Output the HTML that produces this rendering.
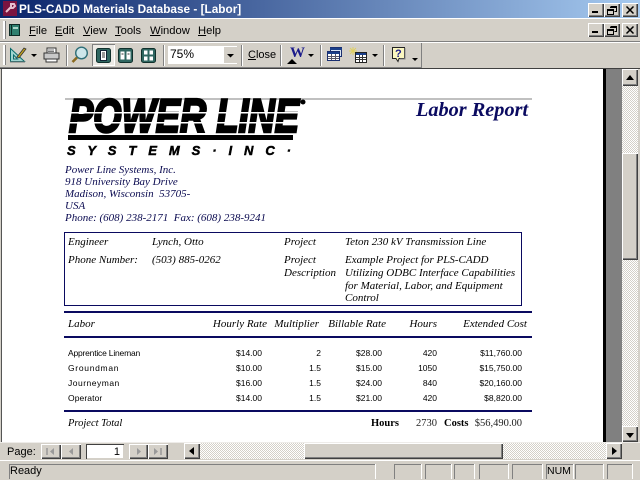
<!DOCTYPE html>
<html><head><meta charset="utf-8">
<style>
html,body{margin:0;padding:0;background:#d4d0c8;}
#r{position:relative;width:640px;height:480px;overflow:hidden;background:#d4d0c8;font-family:"Liberation Sans",sans-serif;}
.a{position:absolute;}
.t{position:absolute;white-space:nowrap;line-height:12px;}
.s{font-family:"Liberation Serif",serif;font-style:italic;font-size:11px;color:#0a0a50;}
.k{color:#000;font-style:italic;font-family:"Liberation Serif",serif;font-size:11px;}
.d{font-size:8.5px;color:#000;}
.rr{text-align:right;}
.m{font-size:11.2px;color:#000;top:25px;}
.u{text-decoration:underline;}
.b{position:absolute;background:#d4d0c8;box-shadow:inset 1px 1px 0 #fff,inset -1px -1px 0 #404040,inset -2px -2px 0 #808080;}
.sep{position:absolute;width:1px;background:#808080;border-right:1px solid #fff;}
.pat{position:absolute;background-color:#fff;background-image:repeating-conic-gradient(#d4d0c8 0 25%,#fff 0 50%);background-size:2px 2px;}
.st{position:absolute;top:464px;height:15px;box-shadow:inset 1px 1px 0 #808080,1px 0 0 #fff;}
svg{position:absolute;overflow:visible;}
</style></head><body><div id="r">

<!-- title bar -->
<div class="a" style="left:0;top:0;width:640px;height:18px;background:linear-gradient(90deg,#0a246a,#a6caf0);"></div>
<svg style="left:3px;top:1px" width="16" height="16" viewBox="0 0 16 16"><rect width="14" height="15" fill="#7a1440"/><path d="M3 11l5-5M8 3h3l1 2-2 2H8z" stroke="#e8c0d0" stroke-width="2" fill="none"/></svg>
<div class="t" style="left:19px;top:3px;font-size:11.800px;font-weight:bold;color:#fff;">PLS-CADD Materials Database - [Labor]</div>
<div class="b" style="left:588px;top:3px;width:16px;height:14px;"></div>
<div class="a" style="left:592px;top:11px;width:6px;height:2px;background:#000;"></div>
<div class="b" style="left:604px;top:3px;width:16px;height:14px;"></div>
<svg style="left:604px;top:3px" width="16" height="14"><path d="M6.500 3.500h6v5h-2M3.500 6.500h6v5h-6z M6 4.500h6 M4 7.500h5" stroke="#000" fill="none"/></svg>
<div class="b" style="left:622px;top:3px;width:16px;height:14px;"></div>
<svg style="left:622px;top:3px" width="16" height="14"><path d="M4.500 3.500l7 7M11.500 3.500l-7 7" stroke="#000" stroke-width="1.500" fill="none"/></svg>
<div class="a" style="left:0;top:18px;width:640px;height:1px;background:#fff;"></div>

<!-- menu bar -->
<div class="a" style="left:3px;top:21px;width:2px;height:18px;background:#fff;border-right:1px solid #808080;"></div>
<svg style="left:9px;top:24px" width="13" height="14"><rect x="0.500" y="0.500" width="10" height="11" fill="#2f7f6e" stroke="#0c2a24"/><rect x="2" y="1" width="1" height="10" fill="#0c2a24"/><rect x="4" y="3" width="5" height="2" fill="#a9d6c8"/></svg>
<div class="t m" style="left:29px;"><span class="u">F</span>ile</div>
<div class="t m" style="left:55px;"><span class="u">E</span>dit</div>
<div class="t m" style="left:83px;"><span class="u">V</span>iew</div>
<div class="t m" style="left:115px;"><span class="u">T</span>ools</div>
<div class="t m" style="left:150px;"><span class="u">W</span>indow</div>
<div class="t m" style="left:198px;"><span class="u">H</span>elp</div>
<div class="b" style="left:588px;top:23px;width:16px;height:14px;"></div>
<div class="a" style="left:592px;top:31px;width:6px;height:2px;background:#000;"></div>
<div class="b" style="left:604px;top:23px;width:16px;height:14px;"></div>
<svg style="left:604px;top:23px" width="16" height="14"><path d="M6.500 3.500h6v5h-2M3.500 6.500h6v5h-6z M6 4.500h6 M4 7.500h5" stroke="#000" fill="none"/></svg>
<div class="b" style="left:622px;top:23px;width:16px;height:14px;"></div>
<svg style="left:622px;top:23px" width="16" height="14"><path d="M4.500 3.500l7 7M11.500 3.500l-7 7" stroke="#000" stroke-width="1.500" fill="none"/></svg>
<div class="a" style="left:0;top:41px;width:640px;height:1px;background:#808080;"></div>
<div class="a" style="left:0;top:42px;width:640px;height:1px;background:#fff;"></div>

<!-- toolbar -->
<div class="a" style="left:0;top:43px;width:422px;height:25px;box-shadow:inset -1px -1px 0 #808080,inset -1px 0 0 #fff;"></div>
<div class="a" style="left:3px;top:45px;width:2px;height:20px;background:#fff;border-right:1px solid #808080;"></div>
<svg style="left:9px;top:47px" width="17" height="17"><path d="M1.500 1.500v13h14zM4.500 8v4h4z" fill="#9fd4d0" fill-rule="evenodd" stroke="#0a6a6a"/><path d="M8 10l7-9 2 1-7 9z" fill="#c0a020" stroke="#333" stroke-width=".8"/><path d="M1 15h15" stroke="#777"/></svg>
<svg style="left:31px;top:54px" width="7" height="4"><path d="M0 0h6l-3 3z" fill="#000"/></svg>
<svg style="left:43px;top:47px" width="17" height="17"><path d="M4 1h9v5H4z" fill="#fff" stroke="#333"/><path d="M1 6h15v6H1z" fill="#c8c8c8" stroke="#333"/><path d="M3 12h11v3H3z" fill="#fff" stroke="#333"/><path d="M5 3h6M5 4.500h6" stroke="#777"/></svg>
<div class="sep" style="left:66px;top:45px;height:21px;"></div>
<svg style="left:71px;top:46px" width="18" height="18"><circle cx="10.500" cy="7" r="5.800" fill="#cde6ea" stroke="#2f6f78" stroke-width="1.400"/><path d="M6 11.500L1.500 16" stroke="#8a6a20" stroke-width="2.600"/></svg>
<div class="a" style="left:92px;top:44px;width:23px;height:22px;background:#eceae5;box-shadow:inset 1px 1px 0 #808080,inset -1px -1px 0 #fff;"></div>
<svg style="left:96px;top:48px" width="15" height="15"><rect x=".5" y=".5" width="14" height="14" rx="2" fill="#2f6660" stroke="#10302c"/><rect x="4.500" y="2.500" width="6" height="10" fill="#fff" stroke="#123"/><path d="M6 5h3M6 7h3M6 9h3" stroke="#333"/></svg>
<svg style="left:118px;top:48px" width="15" height="15"><rect x=".5" y=".5" width="14" height="14" rx="2" fill="#2f6660" stroke="#10302c"/><rect x="2.500" y="3.500" width="4" height="8" fill="#fff"/><rect x="8.500" y="3.500" width="4" height="8" fill="#fff"/><path d="M3.500 6h2M9.500 6h2" stroke="#333"/></svg>
<svg style="left:141px;top:48px" width="15" height="15"><rect x=".5" y=".5" width="14" height="14" rx="2" fill="#2f6660" stroke="#10302c"/><rect x="3" y="2.500" width="3.500" height="4" fill="#fff"/><rect x="8.500" y="2.500" width="3.500" height="4" fill="#fff"/><rect x="3" y="8.500" width="3.500" height="4" fill="#fff"/><rect x="8.500" y="8.500" width="3.500" height="4" fill="#fff"/></svg>
<div class="sep" style="left:163px;top:45px;height:21px;"></div>
<div class="a" style="left:168px;top:46px;width:69px;height:18px;background:#fff;"></div>
<div class="t" style="left:170px;top:48px;font-size:12px;color:#000;">75%</div>
<div class="a" style="left:224px;top:47px;width:13px;height:16px;background:#d4d0c8;"></div>
<svg style="left:227px;top:54px" width="7" height="4"><path d="M0 0h7l-3.500 3.500z" fill="#000"/></svg>
<div class="sep" style="left:241px;top:45px;height:21px;"></div>
<div class="t" style="left:248px;top:49px;font-size:11px;color:#000;"><span class="u">C</span>lose</div>
<div class="sep" style="left:280px;top:45px;height:21px;"></div>
<div class="t" style="left:290px;top:46px;font-size:15px;line-height:14px;font-weight:bold;font-family:'Liberation Serif',serif;color:#1a1a8a;">W</div>
<svg style="left:287px;top:59px" width="10" height="5"><path d="M0 5l5-5 5 5z" fill="#000"/></svg>
<svg style="left:308px;top:54px" width="7" height="4"><path d="M0 0h6l-3 3z" fill="#000"/></svg>
<div class="sep" style="left:320px;top:45px;height:21px;"></div>
<svg style="left:327px;top:46px" width="17" height="17"><path d="M3.500 1.500h11v9h-11z" fill="#d8e4f4" stroke="#1a2f70"/><path d="M3 2h12v2H3z" fill="#1a3f8a"/><path d="M.5 5.500h12v9H.5z" fill="#fff" stroke="#1a2f70"/><path d="M1 6h11v2H1z" fill="#1a3f8a"/><path d="M1 10.500h11M1 12.500h11M4.500 8v6M8.500 8v6" stroke="#556"/></svg>
<svg style="left:349px;top:46px" width="18" height="18"><path d="M4 1v8M0 5h8M1 2l6 6M7 2l-6 6" stroke="#e0d060" stroke-width="1"/><path d="M6.500 6.500h11v10h-11z" fill="#fff" stroke="#222"/><path d="M7 7h10v2H7z" fill="#1a3f8a"/><path d="M7 11.500h10M7 13.500h10M10.500 9v7M13.500 9v7" stroke="#333"/></svg>
<svg style="left:372px;top:54px" width="7" height="4"><path d="M0 0h6l-3 3z" fill="#000"/></svg>
<div class="sep" style="left:383px;top:45px;height:21px;"></div>
<svg style="left:392px;top:47px" width="15" height="17"><path d="M.5.5h12v11H7l-1 3-2-3H.5z" fill="#fbf7c0" stroke="#222"/><path d="M13 1v11H8" stroke="#888" fill="none"/></svg>
<div class="t" style="left:395px;top:48px;font-size:11px;font-weight:bold;color:#1a1a8a;">?</div>
<svg style="left:412px;top:58px" width="7" height="4"><path d="M0 0h6l-3 3z" fill="#000"/></svg>
<div class="a" style="left:0;top:68px;width:640px;height:1px;background:#404040;"></div>

<!-- report area -->
<div class="a" style="left:0;top:69px;width:1px;height:373px;background:#d4d0c8;"></div>
<div class="a" style="left:1px;top:69px;width:1px;height:373px;background:#555;"></div>
<div class="a" style="left:2px;top:69px;width:601px;height:373px;background:#fff;"></div>
<div class="a" style="left:603px;top:69px;width:3px;height:373px;background:#000;"></div>
<div class="a" style="left:606px;top:69px;width:16px;height:373px;background:#808080;"></div>

<!-- header -->
<div class="a" style="left:65px;top:98px;width:467px;height:2px;background:#c0c0c0;"></div>
<div class="t" style="left:416px;top:100px;font-size:20.300px;line-height:20px;font-family:'Liberation Serif',serif;font-style:italic;font-weight:bold;color:#0a0a60;">Labor Report</div>

<!-- logo -->
<svg style="left:65px;top:95px" width="245" height="65" viewBox="0 0 245 65">
<text x="4" y="37" font-family="Liberation Sans" font-size="47" font-weight="bold" font-style="italic" textLength="230" lengthAdjust="spacingAndGlyphs" stroke="#000" stroke-width="2.600">POWER LINE</text>
<rect x="0" y="17" width="240" height="1.500" fill="#fff"/>
<rect x="0" y="27" width="240" height="1.500" fill="#fff"/>
<rect x="3" y="40" width="225" height="5" fill="#000"/>
<circle cx="238" cy="7" r="2.500" fill="#000"/>
<text x="2" y="60" font-family="Liberation Sans" font-size="13" font-weight="bold" font-style="italic" textLength="224" fill="#000" stroke="#000" stroke-width=".5">S Y S T E M S · I N C ·</text>
</svg>

<!-- address -->
<div class="t s" style="left:65px;top:164px;">Power Line Systems, Inc.</div>
<div class="t s" style="left:65px;top:176px;">918 University Bay Drive</div>
<div class="t s" style="left:65px;top:188px;">Madison, Wisconsin&nbsp; 53705-</div>
<div class="t s" style="left:65px;top:200px;">USA</div>
<div class="t s" style="left:65px;top:212px;">Phone: (608) 238-2171&nbsp; Fax: (608) 238-9241</div>

<!-- box -->
<div class="a" style="left:64px;top:232px;width:456px;height:72px;border:1px solid #0a0a60;"></div>
<div class="t k" style="left:68px;top:236px;">Engineer</div>
<div class="t k" style="left:152px;top:236px;">Lynch, Otto</div>
<div class="t k" style="left:284px;top:236px;">Project</div>
<div class="t k" style="left:345px;top:236px;">Teton 230 kV Transmission Line</div>
<div class="t k" style="left:68px;top:254px;">Phone Number:</div>
<div class="t k" style="left:152px;top:254px;">(503) 885-0262</div>
<div class="t k" style="left:284px;top:254px;">Project</div>
<div class="t k" style="left:284px;top:267px;">Description</div>
<div class="t k" style="left:345px;top:254px;">Example Project for PLS-CADD</div>
<div class="t k" style="left:345px;top:267px;">Utilizing ODBC Interface Capabilities</div>
<div class="t k" style="left:345px;top:280px;">for Material, Labor, and Equipment</div>
<div class="t k" style="left:345px;top:292px;">Control</div>

<!-- table head -->
<div class="a" style="left:64px;top:311px;width:468px;height:2px;background:#0a0a60;"></div>
<div class="t k" style="left:68px;top:318px;">Labor</div>
<div class="t k rr" style="left:190px;width:77px;top:318px;">Hourly Rate</div>
<div class="t k rr" style="left:260px;width:59px;top:318px;">Multiplier</div>
<div class="t k rr" style="left:316px;width:70px;top:318px;">Billable Rate</div>
<div class="t k rr" style="left:390px;width:47px;top:318px;">Hours</div>
<div class="t k rr" style="left:440px;width:87px;top:318px;">Extended Cost</div>
<div class="a" style="left:64px;top:336px;width:468px;height:2px;background:#0a0a60;"></div>

<!-- rows -->
<div class="t d" style="left:68px;top:347px;letter-spacing:-.2px;">Apprentice Lineman</div>
<div class="t d rr" style="left:200px;width:62px;top:347px;">$14.00</div>
<div class="t d rr" style="left:280px;width:41px;top:347px;">2</div>
<div class="t d rr" style="left:330px;width:52px;top:347px;">$28.00</div>
<div class="t d rr" style="left:400px;width:37px;top:347px;">420</div>
<div class="t d rr" style="left:450px;width:72px;top:347px;">$11,760.00</div>

<div class="t d" style="left:68px;top:362px;letter-spacing:.7px;">Groundman</div>
<div class="t d rr" style="left:200px;width:62px;top:362px;">$10.00</div>
<div class="t d rr" style="left:280px;width:41px;top:362px;">1.5</div>
<div class="t d rr" style="left:330px;width:52px;top:362px;">$15.00</div>
<div class="t d rr" style="left:400px;width:37px;top:362px;">1050</div>
<div class="t d rr" style="left:450px;width:72px;top:362px;">$15,750.00</div>

<div class="t d" style="left:68px;top:377px;letter-spacing:.5px;">Journeyman</div>
<div class="t d rr" style="left:200px;width:62px;top:377px;">$16.00</div>
<div class="t d rr" style="left:280px;width:41px;top:377px;">1.5</div>
<div class="t d rr" style="left:330px;width:52px;top:377px;">$24.00</div>
<div class="t d rr" style="left:400px;width:37px;top:377px;">840</div>
<div class="t d rr" style="left:450px;width:72px;top:377px;">$20,160.00</div>

<div class="t d" style="left:68px;top:392px;letter-spacing:.1px;">Operator</div>
<div class="t d rr" style="left:200px;width:62px;top:392px;">$14.00</div>
<div class="t d rr" style="left:280px;width:41px;top:392px;">1.5</div>
<div class="t d rr" style="left:330px;width:52px;top:392px;">$21.00</div>
<div class="t d rr" style="left:400px;width:37px;top:392px;">420</div>
<div class="t d rr" style="left:450px;width:72px;top:392px;">$8,820.00</div>

<div class="a" style="left:64px;top:410px;width:468px;height:2px;background:#0a0a60;"></div>
<div class="t k" style="left:68px;top:418px;font-size:10.500px;">Project Total</div>
<div class="t" style="left:371px;top:418px;font-family:'Liberation Serif',serif;font-weight:bold;font-size:10.500px;color:#000;">Hours</div>
<div class="t" style="left:400px;width:37px;text-align:right;top:418px;font-family:'Liberation Serif',serif;font-size:10.500px;color:#222;">2730</div>
<div class="t" style="left:444px;top:418px;font-family:'Liberation Serif',serif;font-weight:bold;font-size:10.500px;color:#000;">Costs</div>
<div class="t" style="left:470px;width:52px;text-align:right;top:418px;font-family:'Liberation Serif',serif;font-size:10.500px;color:#222;">$56,490.00</div>

<!-- vertical scrollbar -->
<div class="pat" style="left:622px;top:69px;width:16px;height:373px;"></div>
<div class="b" style="left:622px;top:69px;width:16px;height:17px;"></div>
<svg style="left:626px;top:75px" width="9" height="5"><path d="M0 5L4 0l4 5z" fill="#000"/></svg>
<div class="b" style="left:622px;top:153px;width:16px;height:107px;"></div>
<div class="b" style="left:622px;top:426px;width:16px;height:16px;"></div>
<svg style="left:626px;top:433px" width="9" height="5"><path d="M0 0h8L4 5z" fill="#000"/></svg>

<!-- page nav & hscroll -->
<div class="a" style="left:0;top:442px;width:640px;height:1px;background:#fff;opacity:.6;"></div>
<div class="t" style="left:7px;top:446px;font-size:11px;color:#000;">Page:</div>
<div class="b" style="left:41px;top:444px;width:20px;height:15px;"></div>
<svg style="left:46px;top:448px" width="10" height="8"><path d="M1 0v7" stroke="#999" stroke-width="1.500"/><path d="M8 0L4 3.500 8 7z" fill="#999"/></svg>
<div class="b" style="left:61px;top:444px;width:20px;height:15px;"></div>
<svg style="left:67px;top:448px" width="8" height="8"><path d="M6 0L2 3.500 6 7z" fill="#999"/></svg>
<div class="a" style="left:86px;top:444px;width:38px;height:15px;background:#fff;box-shadow:inset 1px 1px 0 #404040,inset -1px -1px 0 #d4d0c8;"></div>
<div class="t" style="left:86px;top:446px;width:34px;text-align:right;font-size:11px;color:#000;">1</div>
<div class="b" style="left:129px;top:444px;width:19px;height:15px;"></div>
<svg style="left:135px;top:448px" width="8" height="8"><path d="M2 0l4 3.500L2 7z" fill="#999"/></svg>
<div class="b" style="left:148px;top:444px;width:20px;height:15px;"></div>
<svg style="left:153px;top:448px" width="10" height="8"><path d="M1 0l4 3.500L1 7z" fill="#999"/><path d="M8 0v7" stroke="#999" stroke-width="1.500"/></svg>
<div class="pat" style="left:184px;top:443px;width:438px;height:16px;"></div>
<div class="b" style="left:184px;top:443px;width:16px;height:16px;"></div>
<svg style="left:189px;top:447px" width="5" height="9"><path d="M5 0L0 4l5 4z" fill="#000"/></svg>
<div class="b" style="left:304px;top:443px;width:199px;height:16px;"></div>
<div class="b" style="left:606px;top:443px;width:16px;height:16px;"></div>
<svg style="left:612px;top:447px" width="5" height="9"><path d="M0 0l5 4-5 4z" fill="#000"/></svg>

<!-- status bar -->
<div class="a" style="left:0;top:460px;width:640px;height:1px;background:#fff;"></div>
<div class="st" style="left:9px;width:366px;"></div>
<div class="t" style="left:10px;top:465px;font-size:11px;color:#000;">Ready</div>
<div class="st" style="left:394px;width:27px;"></div>
<div class="st" style="left:425px;width:26px;"></div>
<div class="st" style="left:454px;width:20px;"></div>
<div class="st" style="left:479px;width:29px;"></div>
<div class="st" style="left:512px;width:30px;"></div>
<div class="st" style="left:546px;width:27px;"></div>
<div class="t" style="left:547px;top:465px;font-size:10.500px;color:#000;">NUM</div>
<div class="st" style="left:575px;width:28px;"></div>
<div class="st" style="left:607px;width:25px;"></div>

</div></body></html>
